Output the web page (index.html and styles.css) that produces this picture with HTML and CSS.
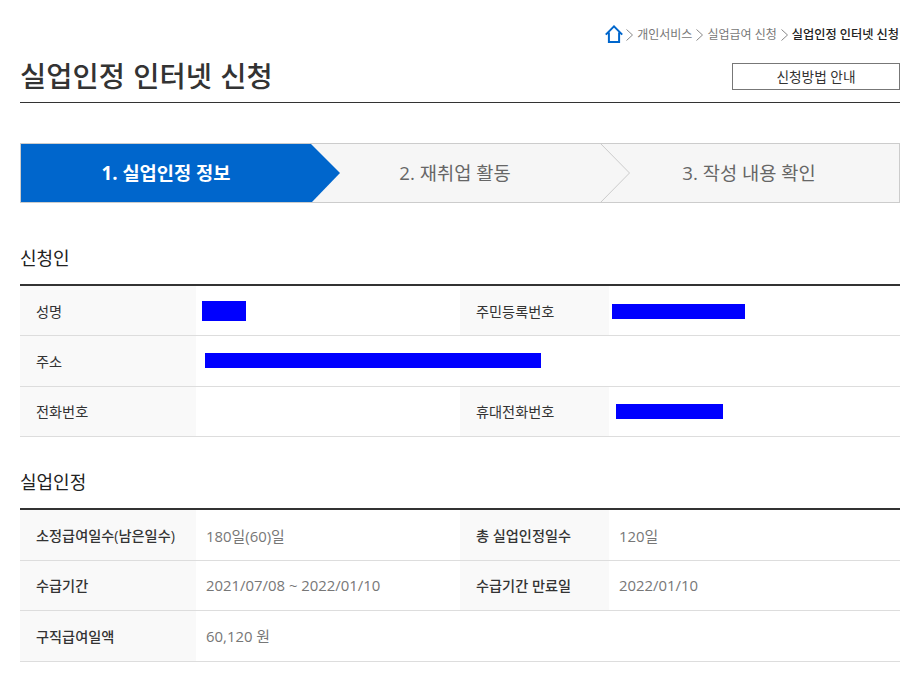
FILE: index.html
```
<!DOCTYPE html>
<html lang="ko">
<head>
<meta charset="utf-8">
<title>실업인정 인터넷 신청</title>
<link rel="stylesheet" href="styles.css">
</head>
<body>
<div class="page">
  <nav class="crumbs">
    <svg class="home" width="18" height="18" viewBox="0 0 18 18"><path d="M.8 9.6 9 1.4l8.200 8.200M3.900 7.500V17h10.200V7.500" fill="none" stroke="#0066cc" stroke-width="2"/></svg>
    <svg class="sep" width="7" height="12" viewBox="0 0 7 12"><path d="M.5.5 6.500 6 .5 11.500" fill="none" stroke="#888"/></svg><span>개인서비스</span>
    <svg class="sep" width="7" height="12" viewBox="0 0 7 12"><path d="M.5.5 6.500 6 .5 11.500" fill="none" stroke="#888"/></svg><span>실업급여 신청</span>
    <svg class="sep" width="7" height="12" viewBox="0 0 7 12"><path d="M.5.5 6.500 6 .5 11.500" fill="none" stroke="#888"/></svg><strong>실업인정 인터넷 신청</strong>
  </nav>
  <header class="head">
    <h1>실업인정 인터넷 신청</h1>
    <a class="guide">신청방법 안내</a>
  </header>
  <div class="steps">
    <div class="step active">1. 실업인정 정보</div>
    <div class="step">2. 재취업 활동</div>
    <div class="step">3. 작성 내용 확인</div>
    <svg class="arrows" width="878" height="58" viewBox="0 0 878 58">
      <path d="M290 0 319 29 291 58H0V0Z" fill="#0066cc"/>
      <path d="M579-1 608.500 29 579 59" fill="none" stroke="#ccc"/>
    </svg>
  </div>
  <h2>신청인</h2>
  <div class="table">
    <div class="row">
      <div class="th">성명</div><div class="td td-a"><i class="mask m1"></i></div>
      <div class="th th2">주민등록번호</div><div class="td"><i class="mask m2"></i></div>
    </div>
    <div class="row">
      <div class="th">주소</div><div class="td td-wide"><i class="mask m3"></i></div>
    </div>
    <div class="row">
      <div class="th">전화번호</div><div class="td td-a"></div>
      <div class="th th2">휴대전화번호</div><div class="td"><i class="mask m4"></i></div>
    </div>
  </div>
  <h2 class="second">실업인정</h2>
  <div class="table">
    <div class="row">
      <div class="th strong">소정급여일수(남은일수)</div><div class="td td-a">180일(60)일</div>
      <div class="th th2 strong">총 실업인정일수</div><div class="td">120일</div>
    </div>
    <div class="row">
      <div class="th strong">수급기간</div><div class="td td-a">2021/07/08 ~ 2022/01/10</div>
      <div class="th th2 strong">수급기간 만료일</div><div class="td">2022/01/10</div>
    </div>
    <div class="row">
      <div class="th strong">구직급여일액</div><div class="td td-wide">60,120 원</div>
    </div>
  </div>
</div>
</body>
</html>
```
FILE: styles.css
```
* { box-sizing: border-box; }
html, body { margin: 0; background: #fff; }
body { font-family: "Open Sans", "Noto Sans CJK KR", sans-serif; color: #333; overflow: hidden; }
.page { width: 880px; margin-left: 20px; height: 676px; }
.crumbs { height: 45px; padding-top: 24px; padding-right: 1px; display: flex; justify-content: flex-end; align-items: center; gap: 4px; font-size: 12px; line-height: 18px; color: #777; white-space: nowrap; }
.crumbs strong { font-size: 12.2px; font-weight: 500; color: #222; }
.home { margin-right: -1px; margin-top: -1px; }
.head { height: 58px; display: flex; justify-content: space-between; align-items: flex-start; border-bottom: 1px solid #333; }
h1 { margin: 0; font-size: 28.5px; word-spacing: 1px; font-weight: 500; line-height: 62px; color: #333; }
.guide { margin-top: 18px; width: 168px; height: 27px; border: 1px solid #777; font-size: 13.7px; line-height: 25px; text-align: center; color: #333; }
.steps { position: relative; margin-top: 40px; height: 60px; display: grid; grid-template-columns: 290px 288px 300px; border: 1px solid #ccc; background: #f6f6f6; }
.step { position: relative; z-index: 1; text-align: center; font-size: 18.7px; line-height: 58px; color: #666; }
.step.active { color: #fff; font-weight: 700; }
.arrows { position: absolute; left: 0; top: 0; }
h2 { margin: 0; padding-top: 42px; height: 81px; font-size: 18px; font-weight: 400; line-height: 26px; color: #222; }
h2.second { height: 71.2px; padding-top: 32px; }
.table { border-top: 2px solid #333; }
.row { display: flex; height: 50.4px; border-bottom: 1px solid #ddd; font-size: 14.2px; }
.th { width: 176px; padding-left: 16px; background: #f9f9f9; display: flex; align-items: center; color: #333; }
.th.strong { font-weight: 500; }
.th2 { width: 149px; }
.td { padding-left: 10px; display: flex; align-items: center; font-size: 14.9px; color: #777; position: relative; flex: 1; }
.td-a { flex: 0 0 264px; }
.td-wide { flex: 1; }
.mask { display: block; background: #00f; position: absolute; }
.m1 { left: 6px; top: 15px; width: 44px; height: 20px; }
.m2 { left: 3px; top: 18px; width: 133px; height: 15px; }
.m3 { left: 9px; top: 17px; width: 336px; height: 15px; }
.m4 { left: 7px; top: 17px; width: 107px; height: 15px; }
```
